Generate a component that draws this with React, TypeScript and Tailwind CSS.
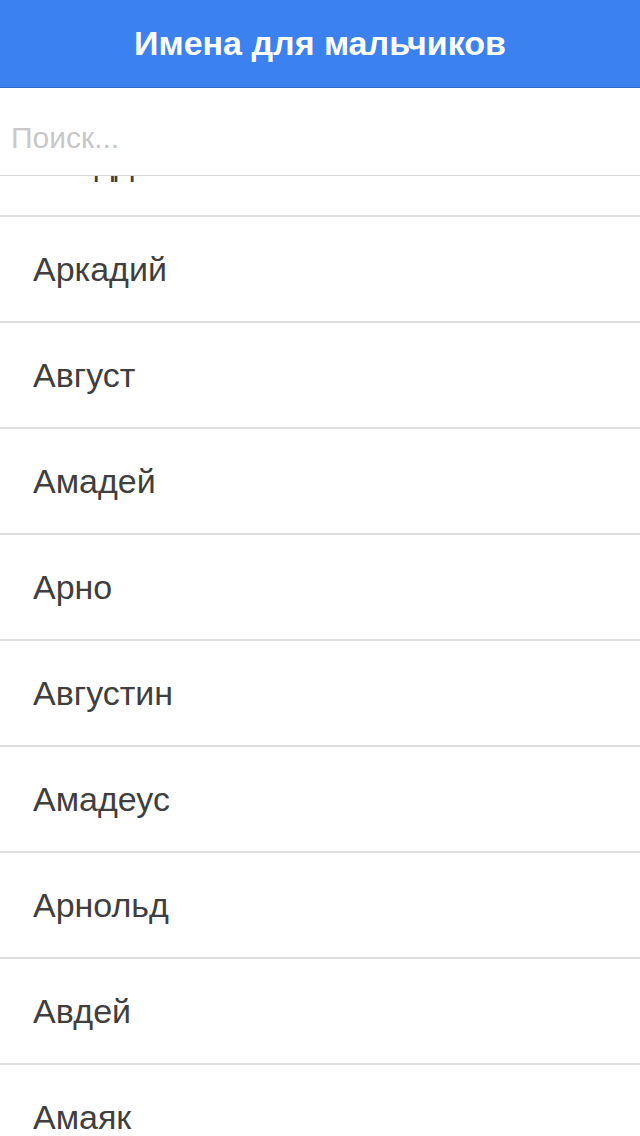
import React from "react";

const names = [
  "Аладдин",
  "Аркадий",
  "Август",
  "Амадей",
  "Арно",
  "Августин",
  "Амадеус",
  "Арнольд",
  "Авдей",
  "Амаяк",
  "Артур",
];

export default function App() {
  return (
    <div className="w-[640px] h-[1136px] flex flex-col bg-white overflow-hidden font-['Liberation_Sans',Arial,sans-serif]">
      <header className="h-[88px] shrink-0 bg-[#3b81ef] border-b border-[#2c69c9] flex items-center justify-center text-white text-[34px] font-bold">
        Имена для мальчиков
      </header>
      <div className="h-[88px] shrink-0 border-b border-[#d6d6d6] flex items-center pt-3 px-[11px]">
        <input
          placeholder="Поиск..."
          className="w-full bg-transparent outline-none text-[30px] text-[#404040] placeholder:text-[#c8c8c8]"
        />
      </div>
      <div className="flex-1 overflow-hidden">
        <ul className="-mt-[65px]">
          {names.map((n) => (
            <li
              key={n}
              className="h-[106px] border-b-2 border-[#dedede] flex items-center pl-[33px] text-[34px] text-[#3f3f3f]"
            >
              {n}
            </li>
          ))}
        </ul>
      </div>
    </div>
  );
}
